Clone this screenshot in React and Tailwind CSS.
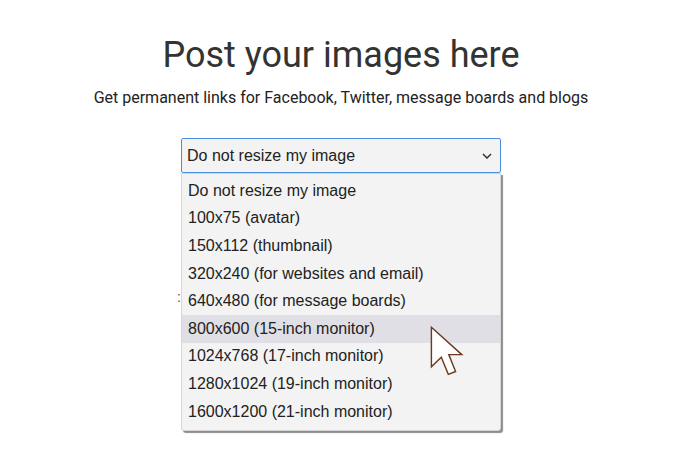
const OPTIONS = [
  "Do not resize my image",
  "100x75 (avatar)",
  "150x112 (thumbnail)",
  "320x240 (for websites and email)",
  "640x480 (for message boards)",
  "800x600 (15-inch monitor)",
  "1024x768 (17-inch monitor)",
  "1280x1024 (19-inch monitor)",
  "1600x1200 (21-inch monitor)",
];

function Cursor() {
  return (
    <svg width="34" height="52" viewBox="0 0 13 20" className="absolute left-[248px] top-[152px]">
      <path
        d="M0.5 0.5 L0.5 15.7 L4.3 12 L7 18.6 L9.8 17.5 L7.2 11 L12.2 11 Z"
        fill="#fff"
        stroke="#6b3a1f"
        strokeWidth="0.55"
        strokeLinejoin="miter"
      />
    </svg>
  );
}

export default function App() {
  return (
    <div className="w-[688px] h-[472px] bg-white">
      <div className="w-[682px] flex flex-col items-center">
        <h1 className="mt-[33px] text-[36px] leading-[44px] text-[#333] font-['Roboto',sans-serif]">
          Post your images here
        </h1>
        <p className="mt-[10px] text-[16px] leading-[22px] text-[#222] font-['Roboto',sans-serif]">
          Get permanent links for Facebook, Twitter, message boards and blogs
        </p>

        <div className="relative mt-[29px] w-[320px] font-['Liberation_Sans',Arial,sans-serif]">
          {/* select box */}
          <div className="h-[35px] flex items-center justify-between pl-[5px] pr-[8px] bg-[#f3f3f3] border border-[#4a8fdc] rounded-[2px] text-[16px] text-[#222]">
            <span>Do not resize my image</span>
            <svg width="10" height="6" viewBox="0 0 10 6" fill="none" stroke="#333" strokeWidth="1.5">
              <polyline points="1 1 5 5 9 1" />
            </svg>
          </div>

          {/* text peeking out behind the list */}
          <span className="absolute left-[-4px] top-[152px] text-[14px] leading-none text-[#555]">:</span>

          {/* open list */}
          <div className="absolute left-0 top-[35px] w-[320px] pt-[3px] pb-[5px] bg-[#f3f3f3] border border-[#d6d6d6] rounded-b-[3px] shadow-[2px_2px_1px_rgba(0,0,0,0.45)]">
            {OPTIONS.map((o, i) => (
              <div
                key={o}
                className={
                  "h-[27.6px] flex items-center pl-[6px] text-[16px] text-[#222] " +
                  (i === 5 ? "bg-[#e0dfe5]" : "")
                }
              >
                {o}
              </div>
            ))}
            <Cursor />
          </div>
        </div>
      </div>
    </div>
  );
}
